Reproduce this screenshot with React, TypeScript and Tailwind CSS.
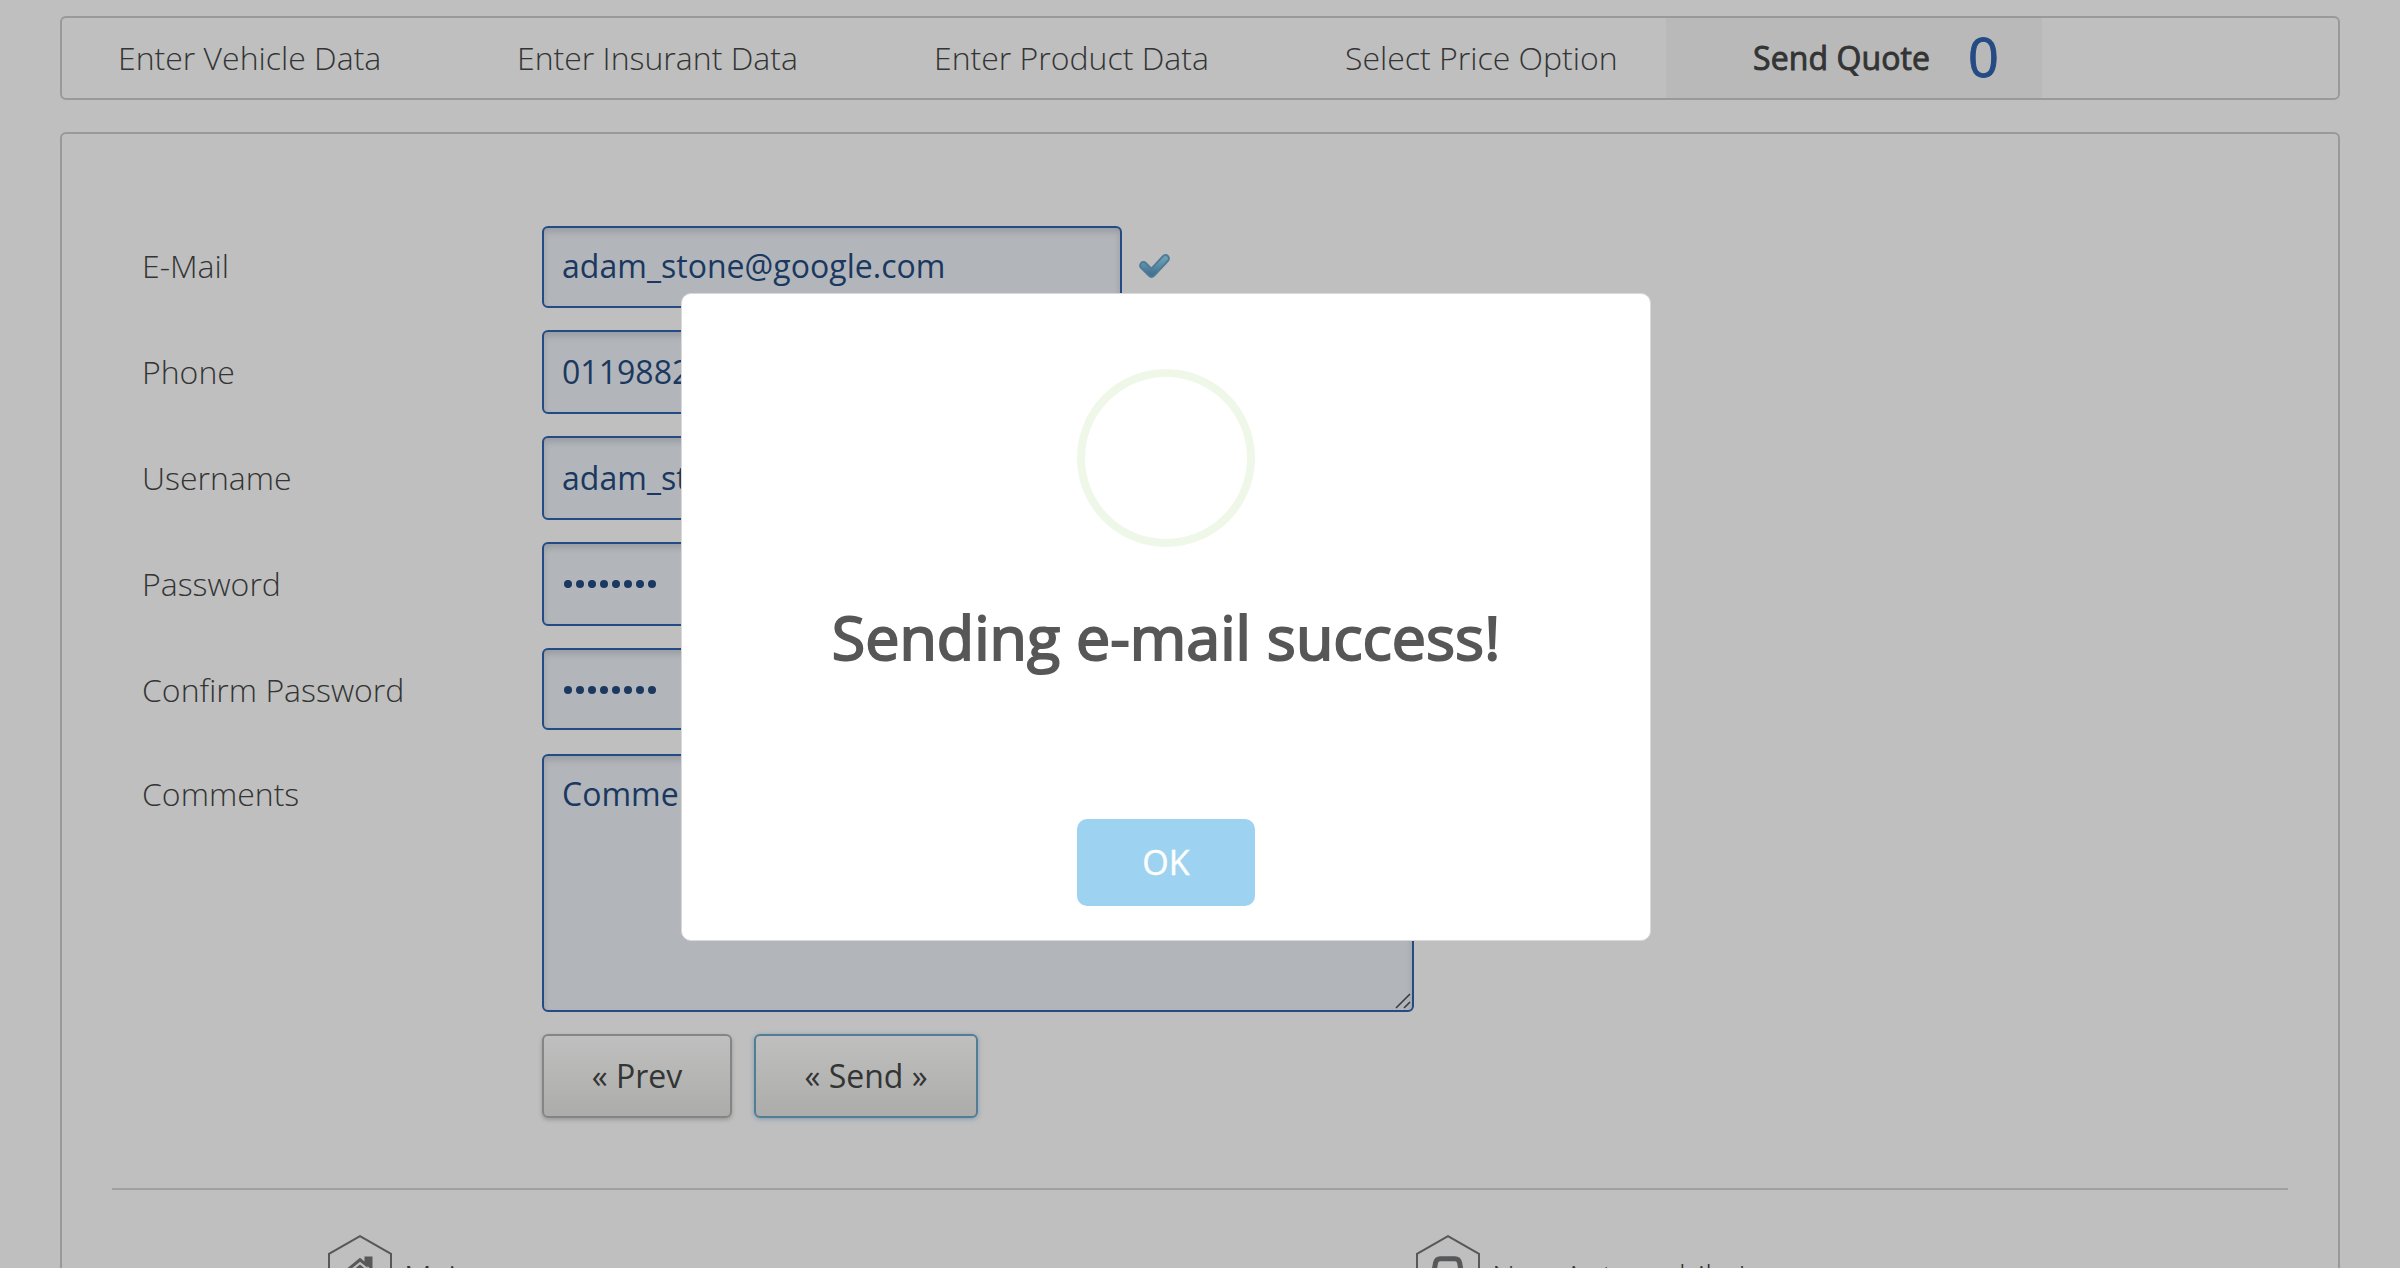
import React from 'react';

const tabs = [
  { label: 'Enter Vehicle Data', box: 'w-[399px]' },
  { label: 'Enter Insurant Data', box: 'w-[417px]' },
  { label: 'Enter Product Data', box: 'w-[411px]' },
  { label: 'Select Price Option', box: 'w-[321px]' },
];

const fields = [
  { label: 'E-Mail', value: 'adam_stone@google.com', row: 'h-[104px]', box: 'h-[82px] pb-[2px]', pad: 'pt-[18px]', valid: true },
  { label: 'Phone', value: '01198829', row: 'h-[106px]', box: 'h-[84px]', pad: 'pt-[20px]' },
  { label: 'Username', value: 'adam_stone', row: 'h-[106px]', box: 'h-[84px]', pad: 'pt-[20px]' },
  { label: 'Password', secret: true, row: 'h-[106px]', box: 'h-[84px]', pad: 'pt-[20px]' },
  { label: 'Confirm Password', secret: true, row: 'h-[106px]', box: 'h-[82px] pt-[2px]', pad: 'pt-[20px]' },
];

const inputSkin =
  'rounded-[6px] border-2 border-[#244b84] bg-[#b2b6bb] text-[#1a3860] shadow-[inset_0_4px_6px_rgba(0,0,0,0.14)]';

function CheckIcon() {
  return (
    <svg className="ml-4 mt-[22px] h-[36px] w-[34px]" viewBox="0 0 34 36" fill="none">
      <defs>
        <linearGradient id="tick" x1="0" y1="0" x2="0" y2="1">
          <stop offset="0" stopColor="#6c9fb6" />
          <stop offset="1" stopColor="#447393" />
        </linearGradient>
      </defs>
      <path d="M5.5 17.5L13.5 25.5L27.5 10.5" stroke="#4d7b96" strokeWidth="8.8" strokeLinecap="round" strokeLinejoin="round" />
      <path d="M5.5 17.5L13.5 25.5L27.5 10.5" stroke="url(#tick)" strokeWidth="5" strokeLinecap="round" strokeLinejoin="round" />
    </svg>
  );
}

function Hexagon({ children }: { children: React.ReactNode }) {
  return (
    <svg className="h-[74px] w-[64px]" viewBox="0 0 64 74" fill="none">
      <path d="M32 1.2L63 18.8V54L32 72.8L1 54V18.8Z" stroke="#57585a" strokeWidth="2" />
      {children}
    </svg>
  );
}

export default function App() {
  return (
    <div className="relative h-[1268px] w-[2400px] overflow-hidden bg-[#bfbfbf] px-[60px] pt-4 font-['Open_Sans',sans-serif] text-[32px] font-light leading-[44px] text-[#333434]">
      <nav className="flex h-[84px] items-stretch rounded-[6px] border-2 border-[#999] pl-[56px]">
        {tabs.map((t) => (
          <div key={t.label} className={`${t.box} shrink-0 whitespace-nowrap pt-[18px]`}>
            {t.label}
          </div>
        ))}
        <div className="flex w-[376px] bg-[#b9b9b9] pl-[87px] pt-[18px] font-normal">
          <span className="w-[215px] whitespace-nowrap tracking-[0.1px] [-webkit-text-stroke:0.9px_#333434]">Send Quote</span>
          <span className="-mt-[2px] text-[54px] leading-[44px] text-[#244b84] [-webkit-text-stroke:1px_#244b84]">0</span>
        </div>
      </nav>

      <main className="mt-8 h-[1200px] rounded-[6px] border-2 border-[#999] px-[50px] pt-[92px]">
        <form className="pl-[30px]">
          {fields.map((f) => (
            <div key={f.label} className={`flex items-start ${f.row}`}>
              <label className={`w-[400px] ${f.pad}`}>{f.label}</label>
              <div className={`flex w-[580px] items-center pl-[18px] font-normal ${f.box} ${inputSkin}`}>
                {f.secret ? (
                  <div className="flex gap-[4px] pl-[2px]">
                    {Array.from({ length: 8 }, (_, i) => (
                      <i key={i} className="size-2 rounded-full bg-[#1a3860]" />
                    ))}
                  </div>
                ) : (
                  <span className="tracking-[0.03px]">{f.value}</span>
                )}
              </div>
              {f.valid && <CheckIcon />}
            </div>
          ))}
          <div className="flex h-[280px] items-start">
            <label className="w-[400px] pt-[18px]">Comments</label>
            <div className={`flex h-[258px] w-[872px] justify-between pl-[18px] pt-[16px] font-normal ${inputSkin}`}>
              <span>Comments</span>
              <svg className="mb-[1px] mr-[1px] h-4 w-4 self-end" viewBox="0 0 16 16" stroke="#3b3d40" strokeWidth="1.6">
                <path d="M1 15L15 1M9 15L15 9" />
              </svg>
            </div>
          </div>
          <div className="flex gap-[22px] pl-[400px] font-normal">
            <div className="flex h-[84px] w-[190px] items-center justify-center rounded-[6px] border-2 border-[#858585] bg-linear-to-b from-[#bfbfbf] to-[#acacaa] shadow-[0_2px_4px_rgba(0,0,0,0.2)]">
              « Prev
            </div>
            <div className="flex h-[84px] w-[224px] items-center justify-center rounded-[6px] border-2 border-[#527d95] bg-linear-to-b from-[#bfbfbf] to-[#acacaa] shadow-[0_1px_5px_rgba(60,110,150,0.45)]">
              « Send »
            </div>
          </div>
        </form>
        <hr className="mt-[70px] border-0 border-t-2 border-solid border-[#a0a0a0]" />
        <footer className="flex pl-[216px] pt-[45px]">
          <div className="flex w-[1088px] gap-3">
            <Hexagon>
              <path d="M17 37L32 24.8L38 29.6V23H43V33.8L47 37" stroke="#57585a" strokeWidth="3" />
              <path d="M38 23H43V34L38 30Z" fill="#57585a" />
              <path d="M32 29.5L43 38.5V50H21V38.5Z" fill="#57585a" />
            </Hexagon>
            <span className="pt-[19px]">Main</span>
          </div>
          <div className="flex gap-3">
            <Hexagon>
              <path d="M17 42L19.5 28Q20.5 23.7 24 23.7H39Q42.800 23.7 43.700 28L46 42Z" stroke="#57585a" strokeWidth="5" />
            </Hexagon>
            <span className="whitespace-nowrap pt-[19px]">New Automobile Insurance</span>
          </div>
        </footer>
      </main>

      <div role="dialog" className="absolute left-[681px] top-[293px] flex h-[648px] w-[970px] flex-col items-center rounded-[10px] border border-[#d9d9d9] bg-white pt-[75px]">
        <div className="size-[178px] rounded-full border-8 border-[#eff8e8]" />
        <h2 className="mt-[48px] whitespace-nowrap text-[61px] font-normal leading-[84px] text-[#575757] [-webkit-text-stroke:2px_#575757]">
          Sending e-mail success!
        </h2>
        <button className="mt-[140px] h-[87px] w-[178px] shrink-0 rounded-[10px] bg-[#9dd3f1] pb-px text-[34px] font-normal text-white [-webkit-text-stroke:0.4px_white]">OK</button>
      </div>
    </div>
  );
}
